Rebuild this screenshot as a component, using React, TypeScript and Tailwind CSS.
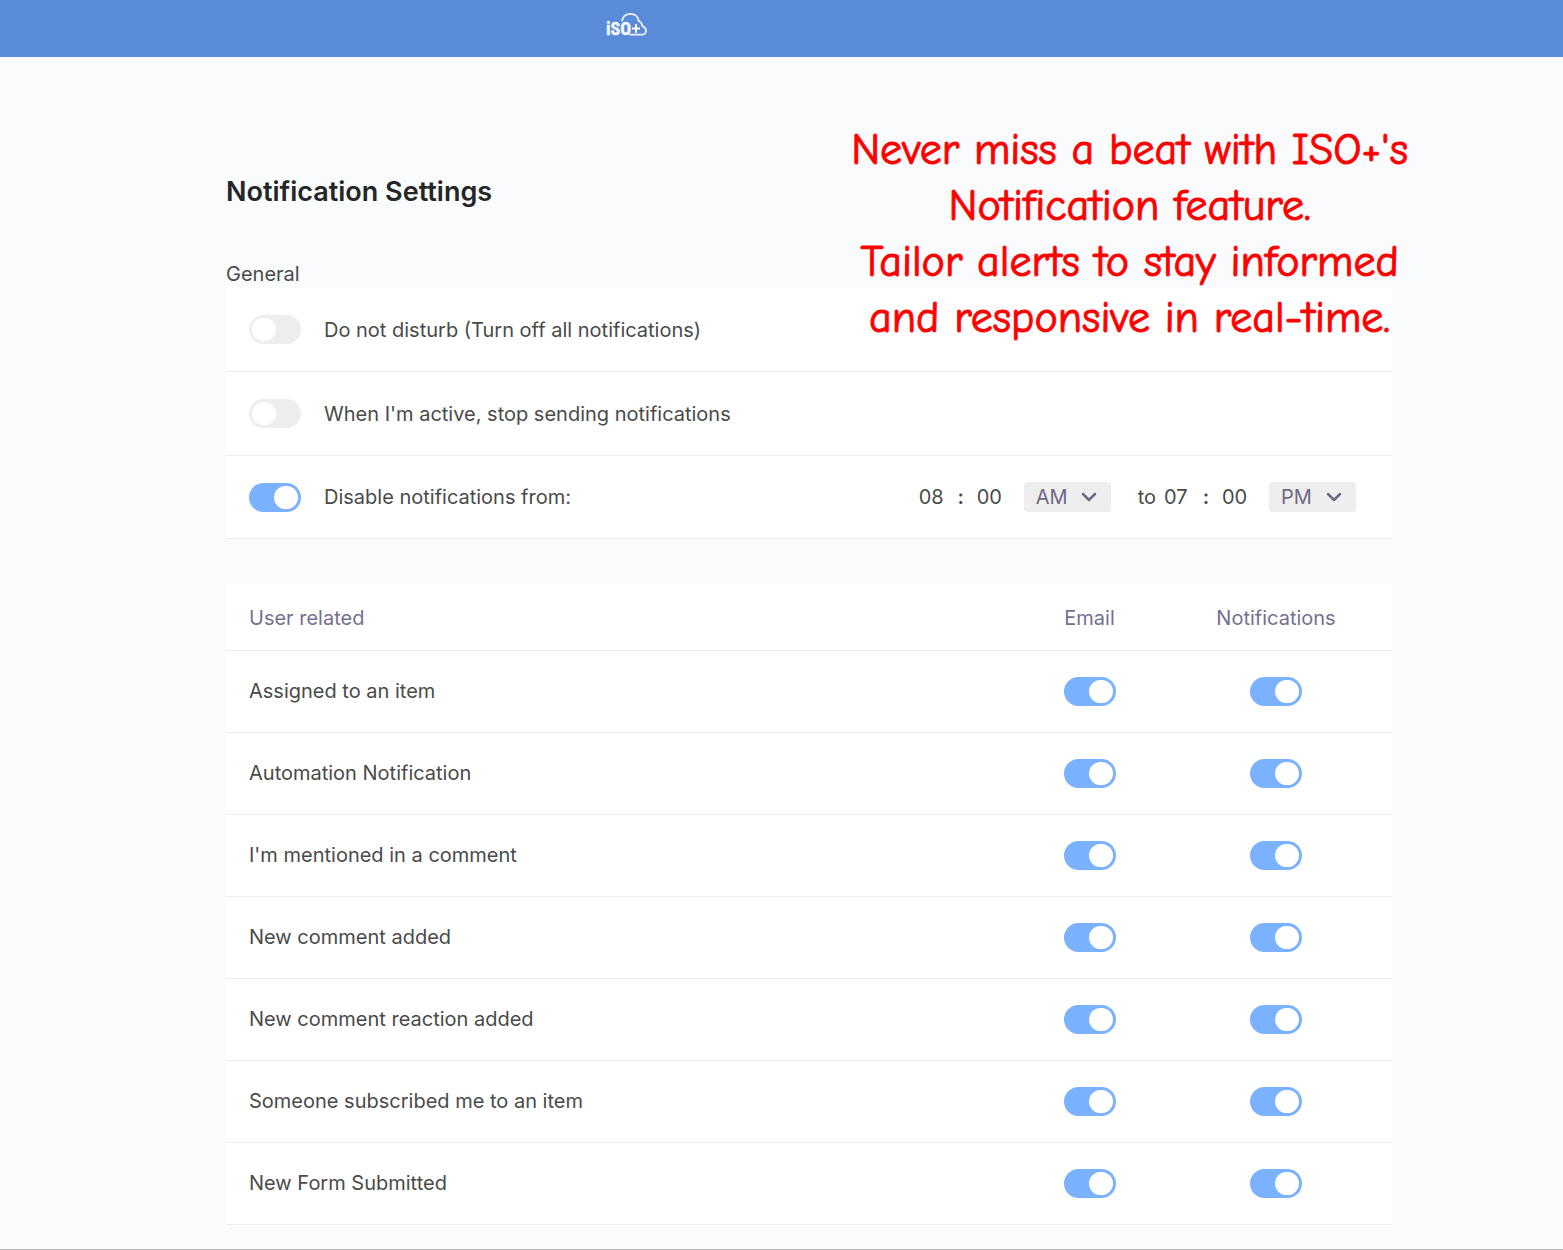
import { useState } from 'react';
import { ChevronDown } from 'lucide-react';

const userRelated = [
  'Assigned to an item',
  'Automation Notification',
  "I'm mentioned in a comment",
  'New comment added',
  'New comment reaction added',
  'Someone subscribed me to an item',
  'New Form Submitted',
];

type ToggleProps = { id?: string; label?: string; defaultOn?: boolean };

function Toggle({ id, label, defaultOn = false }: ToggleProps) {
  const [on, setOn] = useState(defaultOn);

  return (
    <input
      type="checkbox"
      role="switch"
      id={id}
      aria-label={label}
      checked={on}
      onChange={(e) => setOn(e.target.checked)}
      className="inline-flex h-[29px] w-[52px] shrink-0 cursor-pointer appearance-none items-center rounded-full bg-[#eeeeee] px-[3px] align-middle before:h-[23px] before:w-6 before:rounded-full before:bg-white before:content-[''] checked:justify-end checked:bg-[#7ab2ff]"
    />
  );
}

function TimeField({ name, hour, period }: { name: string; hour: string; period: string }) {
  return (
    <div className="flex items-center">
      <input type="text" aria-label={`${name} hour`} defaultValue={hour} className="w-[26px] bg-transparent outline-none" />
      <span className="w-8 text-center font-semibold">:</span>
      <input type="text" aria-label={`${name} minutes`} defaultValue="00" className="w-[26px] bg-transparent outline-none" />
      <div className="relative ml-[21px] text-[#6e6887]">
        <select
          aria-label={`${name} period`}
          defaultValue={period}
          className="block h-[30px] w-[87px] appearance-none rounded-sm bg-[#eeeeee] pl-3 outline-none"
        >
          <option>AM</option>
          <option>PM</option>
        </select>
        <ChevronDown className="pointer-events-none absolute top-[3px] right-2.5 size-6" strokeWidth={2.5} />
      </div>
    </div>
  );
}

function Logo() {
  return (
    <svg viewBox="0 0 42 26" className="h-[26px] w-[42px]" role="img" aria-label="iSO+">
      <path
        d="M16 8.500 C17 4.500 20 1.800 24.500 1.800 C29 1.800 32 4.500 32.800 9 C35.500 10 36 12 36.500 14 C39 15.500 40.200 17 40 19 C39.800 21.500 38 22.700 35.500 22.700 L24 22.700"
        fill="none"
        stroke="#e9f0fb"
        strokeWidth="1.8"
        strokeLinecap="round"
        strokeLinejoin="round"
      />
      <text
        x="0"
        y="23"
        fill="#f4f8ff"
        stroke="#f4f8ff"
        strokeWidth="0.4"
        fontFamily="'Liberation Sans Narrow', 'Roboto Condensed', Roboto, sans-serif"
        fontSize="18"
        fontWeight="700"
      >
        iSO
      </text>
      <path d="M26 16.500 H34 M30 12 V21" stroke="#ffffff" strokeWidth="1.8" />
    </svg>
  );
}

export default function App() {
  return (
    <div className="relative flex min-h-screen flex-col border-b border-[#b9b5b3] bg-[#fafbfd] font-[Inter,sans-serif] text-xl text-[#4a4a4a]">
      <header className="h-[57px] bg-[#5a8bd9] pt-3 pl-[606px]">
        <Logo />
      </header>

      <main className="pt-[117px] pr-[171px] pl-[226px]">
        <h1 className="text-[27px] leading-9 font-semibold text-[#262626]">Notification Settings</h1>

        <h2 className="mt-[50px] leading-7">General</h2>

        {/* General settings */}
        <section className="bg-white">
          <div className="flex h-[84px] items-center gap-[23px] border-b border-[#ededed] pl-[23px]">
            <Toggle id="dnd" />
            <label htmlFor="dnd">Do not disturb (Turn off all notifications)</label>
          </div>
          <div className="flex h-[84px] items-center gap-[23px] border-b border-[#ededed] pl-[23px]">
            <Toggle id="active" />
            <label htmlFor="active">When I'm active, stop sending notifications</label>
          </div>
          <div className="flex h-[83px] items-center gap-[23px] border-b border-[#ededed] pr-9 pl-[23px]">
            <Toggle id="schedule" defaultOn />
            <label htmlFor="schedule">Disable notifications from:</label>
            <div className="ml-auto flex items-center">
              <TimeField name="From" hour="08" period="AM" />
              <span className="mr-2 ml-[27px]">to</span>
              <TimeField name="To" hour="07" period="PM" />
            </div>
          </div>
        </section>

        {/* Per event settings */}
        <table className="mt-[45px] w-full table-fixed border-collapse bg-white">
          <thead>
            <tr className="h-[66px] border-b border-[#ededed] text-[#766f8f]">
              <th className="pt-0.5 pl-[23px] text-left font-normal">User related</th>
              <th className="w-[141px] pt-0.5 font-normal">Email</th>
              <th className="w-[232px] pt-0.5 font-normal">Notifications</th>
            </tr>
          </thead>
          <tbody>
            {userRelated.map((item) => (
              <tr key={item} className="h-[82px] border-b border-[#ededed]">
                <td className="pl-[23px]">{item}</td>
                <td className="text-center">
                  <Toggle label={`${item}: email`} defaultOn />
                </td>
                <td className="text-center">
                  <Toggle label={`${item}: notifications`} defaultOn />
                </td>
              </tr>
            ))}
          </tbody>
        </table>
      </main>

      {/* Caption over the page */}
      <p className="pointer-events-none absolute top-[122px] right-[155px] text-center font-['Comic_Sans_MS','Comic_Neue','Open_Sans',sans-serif] text-[44px] leading-14 whitespace-nowrap text-[#ff0000] [-webkit-text-stroke:1px_#ff0000]">
        Never miss a beat with ISO+'s
        <br />
        Notification feature.
        <br />
        Tailor alerts to stay informed
        <br />
        and responsive in real-time.
      </p>
    </div>
  );
}
